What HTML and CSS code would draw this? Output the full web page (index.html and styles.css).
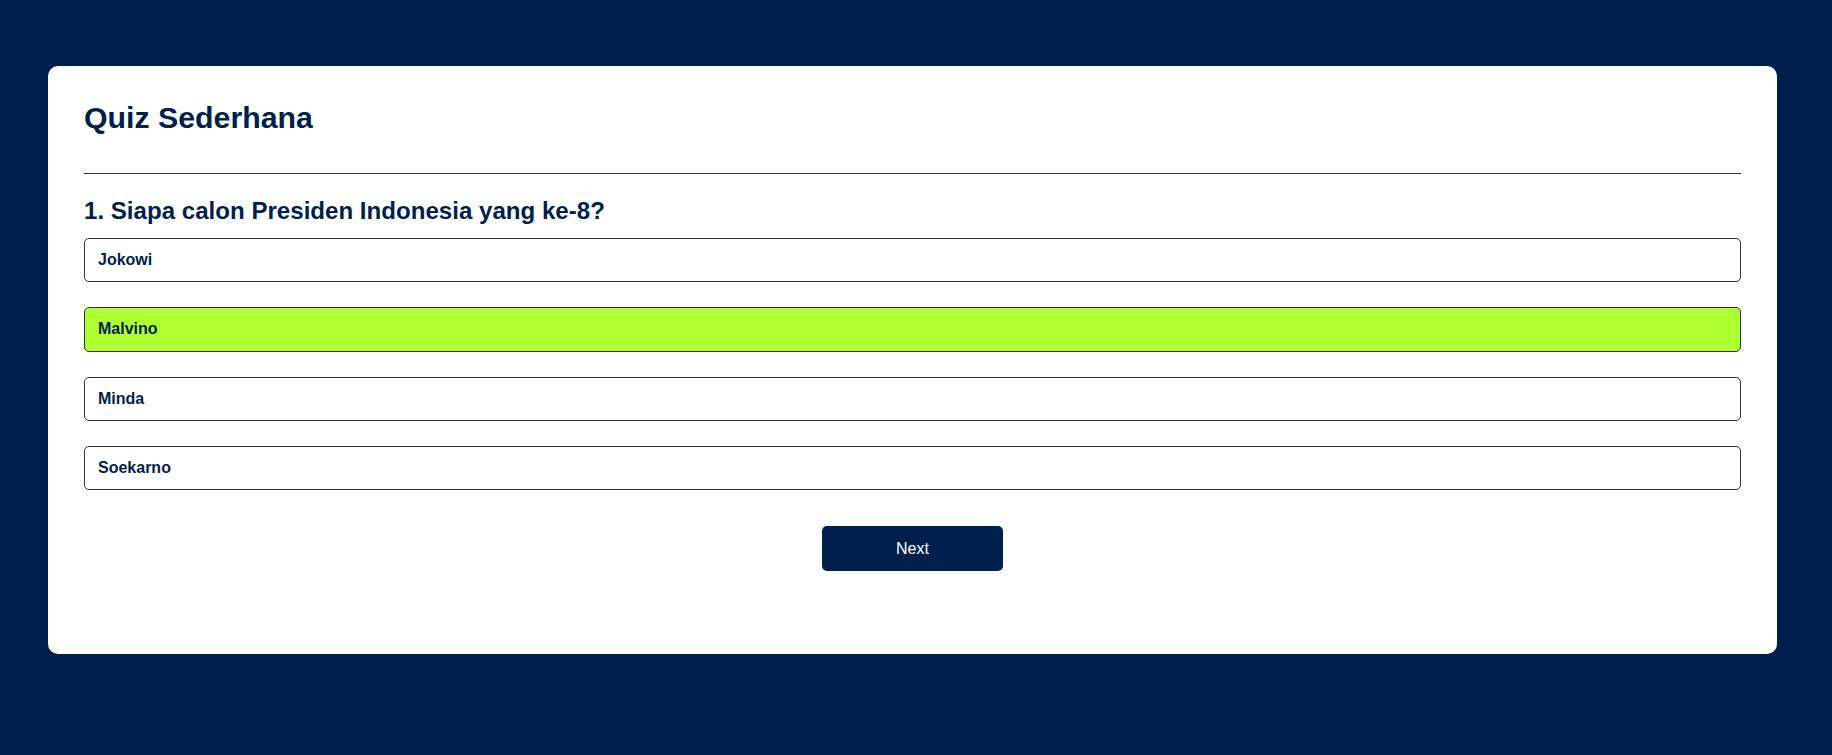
FILE: index.html
```html
<!DOCTYPE html>
<html lang="id">
<head>
<meta charset="utf-8">
<title>Quiz Sederhana</title>
<link rel="stylesheet" href="styles.css">
</head>
<body>
<main class="app">
  <h1 class="title">Quiz Sederhana</h1>
  <hr class="divider">
  <section class="quiz">
    <h2 class="question">1. Siapa calon Presiden Indonesia yang ke-8?</h2>
    <div class="answers">
      <button class="answer">Jokowi</button>
      <button class="answer correct">Malvino</button>
      <button class="answer">Minda</button>
      <button class="answer">Soekarno</button>
    </div>
    <div class="actions">
      <button class="next">Next</button>
    </div>
  </section>
</main>
</body>
</html>
```

FILE: styles.css
```css
* {
  box-sizing: border-box;
}

html, body {
  margin: 0;
  height: 100%;
}

body {
  background: #001f4d;
  font-family: "Liberation Sans", Arial, sans-serif;
  padding: 66px 55px 0 48px;
}

.app {
  background: #ffffff;
  border-radius: 10px;
  padding: 35px 36px 83px;
  color: #001f4d;
}

.title {
  margin: 0;
  font-size: 30.3px;
  font-weight: 700;
  line-height: 34px;
}

.divider {
  border: 0;
  border-top: 1px solid #333;
  margin: 38px 0 0;
}

.question {
  margin: 23px 0 0;
  font-size: 24.1px;
  font-weight: 700;
  line-height: 28px;
}

.answers {
  display: flex;
  flex-direction: column;
  gap: 24.9px;
  margin-top: 13px;
}

.answer {
  display: block;
  width: 100%;
  height: 44.4px;
  padding: 0 13px;
  text-align: left;
  background: #ffffff;
  border: 1px solid #333;
  border-radius: 5px;
  color: #001f4d;
  font-family: "Liberation Sans", Arial, sans-serif;
  font-size: 16px;
  font-weight: 700;
}

.answer.correct {
  background: #adff2f;
}

.actions {
  display: flex;
  justify-content: center;
  margin-top: 36px;
}

.next {
  width: 181px;
  height: 45px;
  background: #001f4d;
  color: #ffffff;
  border: 0;
  border-radius: 5px;
  font-family: "Liberation Sans", Arial, sans-serif;
  font-size: 16px;
}
```
